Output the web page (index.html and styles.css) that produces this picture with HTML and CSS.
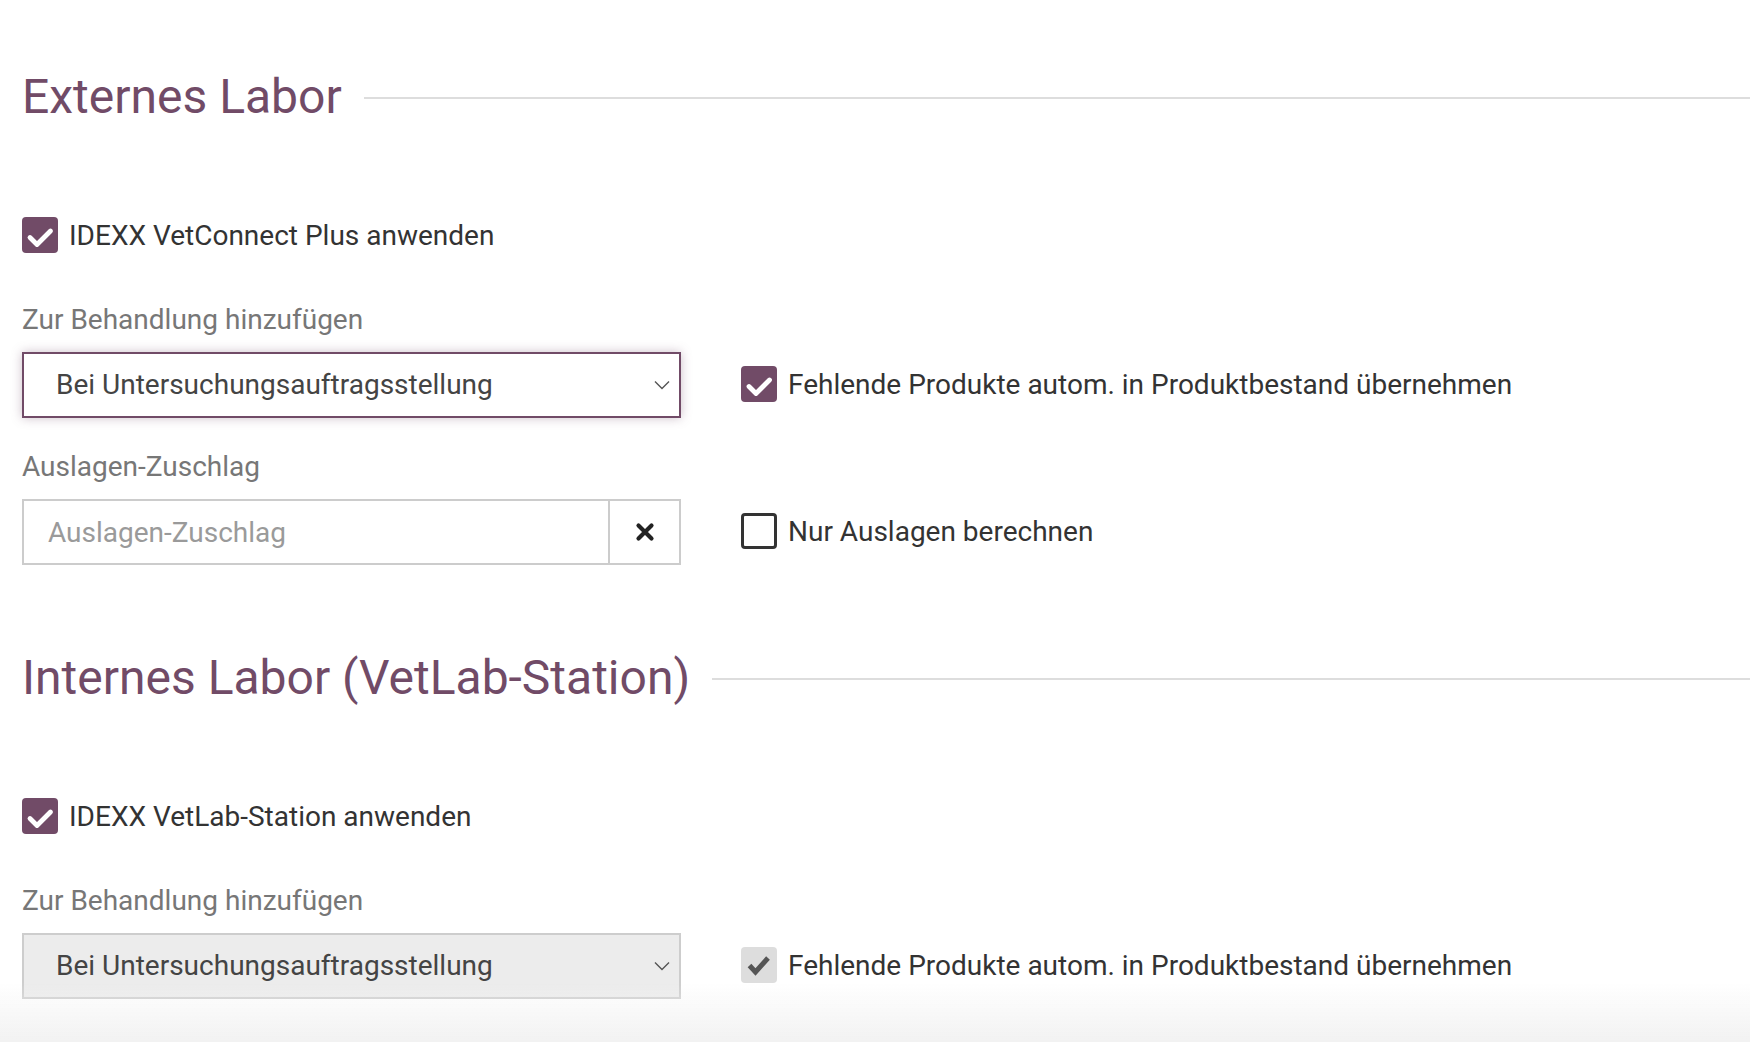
FILE: index.html
```html
<!DOCTYPE html>
<html lang="de">
<head>
<meta charset="utf-8">
<title>Labor</title>
<link rel="stylesheet" href="styles.css">
</head>
<body>
<div class="page">
  <section class="section">
    <div class="section-title">
      <h2 class="title-text">Externes Labor</h2>
      <div class="rule"></div>
    </div>

    <div class="check-row">
      <span class="cb cb-on"><svg viewBox="0 0 36 36" width="36" height="36"><path d="M8 20.5 L15 27.5 L28.5 14" fill="none" stroke="#fff" stroke-width="4.8" stroke-linecap="round" stroke-linejoin="round"/></svg></span>
      <span class="cb-label">IDEXX VetConnect Plus anwenden</span>
    </div>

    <div class="field-row first">
      <div class="field">
        <div class="field-label">Zur Behandlung hinzufügen</div>
        <div class="select select-focus">
          <span class="select-text">Bei Untersuchungsauftragsstellung</span>
          <svg class="chev" viewBox="0 0 16 10" width="16" height="10"><path d="M1 1.5 L8 8.5 L15 1.5" fill="none" stroke="#555" stroke-width="1.4"/></svg>
        </div>
      </div>
      <div class="check-row side">
        <span class="cb cb-on"><svg viewBox="0 0 36 36" width="36" height="36"><path d="M8 20.5 L15 27.5 L28.5 14" fill="none" stroke="#fff" stroke-width="4.8" stroke-linecap="round" stroke-linejoin="round"/></svg></span>
        <span class="cb-label">Fehlende Produkte autom. in Produktbestand übernehmen</span>
      </div>
    </div>

    <div class="field-row">
      <div class="field">
        <div class="field-label">Auslagen-Zuschlag</div>
        <div class="input-group">
          <span class="input-text">Auslagen-Zuschlag</span>
          <span class="input-btn"><svg viewBox="0 0 20 20" width="20" height="20"><path d="M3.5 3.5 L16.5 16.5 M16.5 3.5 L3.5 16.5" fill="none" stroke="#222" stroke-width="4.2" stroke-linecap="round"/></svg></span>
        </div>
      </div>
      <div class="check-row side">
        <span class="cb cb-off"></span>
        <span class="cb-label">Nur Auslagen berechnen</span>
      </div>
    </div>
  </section>

  <section class="section second">
    <div class="section-title">
      <h2 class="title-text">Internes Labor (VetLab-Station)</h2>
      <div class="rule"></div>
    </div>

    <div class="check-row">
      <span class="cb cb-on"><svg viewBox="0 0 36 36" width="36" height="36"><path d="M8 20.5 L15 27.5 L28.5 14" fill="none" stroke="#fff" stroke-width="4.8" stroke-linecap="round" stroke-linejoin="round"/></svg></span>
      <span class="cb-label">IDEXX VetLab-Station anwenden</span>
    </div>

    <div class="field-row first">
      <div class="field">
        <div class="field-label">Zur Behandlung hinzufügen</div>
        <div class="select select-disabled">
          <span class="select-text">Bei Untersuchungsauftragsstellung</span>
          <svg class="chev" viewBox="0 0 16 10" width="16" height="10"><path d="M1 1.5 L8 8.5 L15 1.5" fill="none" stroke="#555" stroke-width="1.4"/></svg>
        </div>
      </div>
      <div class="check-row side">
        <span class="cb cb-disabled"><svg viewBox="0 0 36 36" width="36" height="36"><path d="M8.5 18.5 L14.5 25 L27 11" fill="none" stroke="#555" stroke-width="5"/></svg></span>
        <span class="cb-label">Fehlende Produkte autom. in Produktbestand übernehmen</span>
      </div>
    </div>
  </section>
</div>
<div class="bottom-fade"></div>
</body>
</html>
```

FILE: styles.css
```css
html, body {
  margin: 0;
  padding: 0;
  background: #ffffff;
}

body {
  font-family: Roboto, "Noto Sans", "Liberation Sans", sans-serif;
  color: #333333;
  overflow: hidden;
  height: 1042px;
}

.page {
  padding: 69px 0 0 22px;
}

.section.second {
  margin-top: 85px;
}

.section-title {
  display: flex;
  align-items: center;
}

.title-text {
  margin: 0;
  font-size: 48px;
  line-height: 56px;
  font-weight: 400;
  color: #714b67;
  white-space: nowrap;
}

.rule {
  flex: 1;
  height: 2px;
  background: #dddddd;
  margin-left: 22px;
  margin-top: 2px;
}

.check-row {
  display: flex;
  align-items: center;
  margin-top: 92px;
  height: 36px;
}

.cb {
  width: 36px;
  height: 36px;
  box-sizing: border-box;
  border-radius: 4px;
  flex: none;
  display: block;
}

.cb svg {
  display: block;
}

.cb-on {
  background: #714b67;
}

.cb-off {
  border: 3px solid #333333;
  background: #ffffff;
}

.cb-disabled {
  background: #dddddd;
}

.cb-label {
  margin-left: 11px;
  padding-top: 2px;
  font-size: 28px;
  line-height: 32px;
  color: #333333;
  white-space: nowrap;
}

.field-row {
  display: flex;
  align-items: flex-end;
  margin-top: 33px;
}

.field-row.first {
  margin-top: 51px;
}

.field {
  width: 659px;
  flex: none;
}

.field-label {
  font-size: 28px;
  line-height: 32px;
  color: #777777;
  margin-bottom: 16px;
}

.check-row.side {
  margin-top: 0;
  margin-left: 60px;
  margin-bottom: 16px;
}

.select {
  height: 66px;
  box-sizing: border-box;
  display: flex;
  align-items: center;
  padding: 0 9px 0 32px;
  border: 2px solid #cccccc;
}

.select-focus {
  border-color: #714b67;
  background: #ffffff;
  box-shadow: 0 0 10px rgba(113, 75, 103, 0.35);
}

.select-disabled {
  background: #ececec;
  border-color: #cdcdcd;
}

.select-text {
  flex: 1;
  padding-bottom: 1px;
  font-size: 28px;
  color: #444444;
  white-space: nowrap;
}

.chev {
  display: block;
  flex: none;
}

.input-group {
  height: 66px;
  box-sizing: border-box;
  display: flex;
  border: 2px solid #cccccc;
}

.input-text {
  flex: 1;
  display: flex;
  align-items: center;
  padding-left: 24px;
  font-size: 28px;
  color: #9a9a9a;
  border-right: 2px solid #cccccc;
}

.input-btn {
  width: 69px;
  flex: none;
  display: flex;
  align-items: center;
  justify-content: center;
}

.input-btn svg {
  display: block;
}

.bottom-fade {
  position: fixed;
  left: 0;
  right: 0;
  bottom: 0;
  height: 60px;
  background: linear-gradient(to bottom, rgba(242, 242, 242, 0), rgba(242, 242, 242, 1));
  pointer-events: none;
}
```
